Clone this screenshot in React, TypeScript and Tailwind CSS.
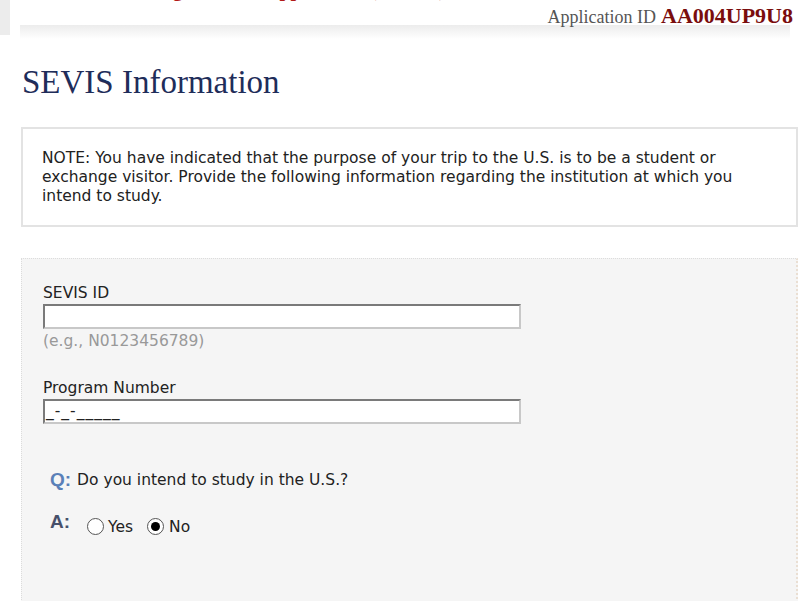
import React from "react";

export default function App() {
  return (
    <div className="w-[800px] h-[601px] overflow-hidden bg-white relative">
      {/* left gray strip */}
      <div className="absolute left-0 top-0 w-[10px] h-[35px] bg-[#ececec]" />
      {/* clipped red header (only descenders visible) */}
      <div className="h-[4px] overflow-hidden relative">
        <div className="absolute left-[30px] top-[-21px] whitespace-nowrap font-['Liberation_Serif',serif] text-[20px] leading-[20px] font-bold text-[#b21a1a]">
          Online Nonimmigrant Visa Application (DS-160)
        </div>
      </div>
      <div className="flex justify-end items-baseline pr-[7px] h-[21px] font-['Liberation_Serif',serif] leading-[24px]">
        <span className="text-[18px] text-[#555]">Application ID</span>
        <span className="ml-[5px] text-[22px] font-bold text-[#7a0d0d]">AA004UP9U8</span>
      </div>
      <div className="ml-[20px] mr-[10px] h-[14px] bg-gradient-to-b from-[#ececec] to-white" />
      <div className="pl-[21px] pr-[2px]">
        <h1 className="mt-[23px] ml-[1px] font-['Liberation_Serif',serif] text-[33px] leading-[40px] text-[#1f2d5a]">
          SEVIS Information
        </h1>
        <div className="mt-[25px] border-2 border-[#e3e3e3] bg-white px-[19px] pt-[20px] pb-[19px] font-['DejaVu_Sans',sans-serif] text-[15.5px] leading-[19px] text-[#222]">
          NOTE: You have indicated that the purpose of your trip to the U.S. is to be a student or exchange visitor. Provide the following information regarding the institution at which you intend to study.
        </div>
        <div className="mt-[31px] h-[400px] bg-[#f5f5f5] border-t border-l border-dotted border-[#dcdcdc] border-r-2 border-r-[#eadfd3] pl-[21px] pt-[24px] font-['DejaVu_Sans',sans-serif] text-[15.5px] text-[#222]">
          <div className="leading-[20px]">SEVIS ID</div>
          <div className="mt-[1px] w-[478px] h-[25px] bg-white border-2 border-t-[#7a7a7a] border-l-[#7a7a7a] border-b-[#c8c8c8] border-r-[#c8c8c8]" />
          <div className="mt-[1px] leading-[22px] text-[#999]">(e.g., N0123456789)</div>
          <div className="mt-[26px] leading-[20px]">Program Number</div>
          <div className="mt-[1px] w-[478px] h-[25px] bg-white border-2 border-t-[#7a7a7a] border-l-[#7a7a7a] border-b-[#c8c8c8] border-r-[#c8c8c8] pl-[1px] leading-[21px] tracking-[1px] text-[#222]">
            _-_-_____
          </div>
          <div className="mt-[42px] flex items-center pl-[7px]">
            <span className="font-['Liberation_Sans',sans-serif] font-bold text-[19px] text-[#5a80b8]">Q:</span>
            <span className="ml-[6px]">Do you intend to study in the U.S.?</span>
          </div>
          <div className="mt-[16px] flex items-start pl-[7px]">
            <span className="font-['Liberation_Sans',sans-serif] font-bold text-[19px] leading-[22px] text-[#47506a]">A:</span>
            <div className="ml-[17px] mt-[7px] flex items-center">
              <span className="w-[17px] h-[17px] rounded-full border border-[#555] bg-white" />
              <span className="ml-[4px] leading-[18px]">Yes</span>
              <span className="ml-[14px] w-[17px] h-[17px] rounded-full border border-[#555] bg-white flex items-center justify-center">
                <span className="w-[9px] h-[9px] rounded-full bg-black" />
              </span>
              <span className="ml-[5px] leading-[18px]">No</span>
            </div>
          </div>
        </div>
      </div>
    </div>
  );
}
